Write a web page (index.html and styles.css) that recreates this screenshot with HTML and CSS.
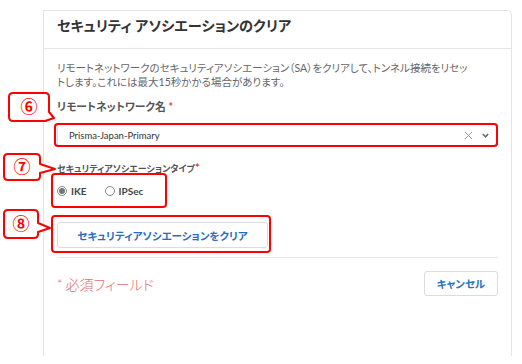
FILE: index.html
```html
<!DOCTYPE html>
<html lang="ja">
<head>
    <meta charset="UTF-8">
    <meta name="viewport" content="width=device-width, initial-scale=1.0">
    <title>セキュリティ アソシエーションのクリア</title>
    <link rel="stylesheet" href="styles.css">
</head>
<body>
    <div class="panel">
        <div class="panel-header">
            <h1>セキュリティ アソシエーションのクリア</h1>
        </div>
        <div class="panel-body">
            <p class="desc">リモートネットワークのセキュリティアソシエーション（SA）をクリアして、トンネル接続をリセットします。これには最大15秒かかる場合があります。</p>

            <div class="field">
                <label class="field-label">リモートネットワーク名 <span class="req">*</span></label>
                <div class="select">
                    <span class="select-value">Prisma-Japan-Primary</span>
                    <span class="select-icons">
                        <svg class="icon-clear" width="9" height="9" viewBox="0 0 9 9"><path d="M1 1 L8 8 M8 1 L1 8" stroke="#9a9a9a" stroke-width="1" fill="none"/></svg>
                        <svg class="icon-chevron" width="7" height="5" viewBox="0 0 7 5"><path d="M0.8 1 L3.5 3.8 L6.2 1" stroke="#666" stroke-width="1.5" fill="none"/></svg>
                    </span>
                </div>
            </div>

            <div class="field field-type">
                <label class="field-label type-label">セキュリティアソシエーションタイプ<span class="req">*</span></label>
                <div class="radios">
                    <label class="radio checked"><span class="radio-dot"></span>IKE</label>
                    <label class="radio"><span class="radio-dot"></span>IPSec</label>
                </div>
            </div>

            <div class="actions">
                <button class="btn btn-clear">セキュリティアソシエーションをクリア</button>
            </div>

            <div class="footer">
                <span class="required-note"><span class="note-star">*</span> 必須フィールド</span>
                <button class="btn btn-cancel">キャンセル</button>
            </div>
        </div>
    </div>

    <!-- 説明用の注釈（赤枠と番号） -->
    <svg class="annotations" width="522" height="364" viewBox="0 0 522 364">
        <g fill="none" stroke="#f00" stroke-width="2" stroke-linejoin="round">
            <rect x="55" y="124" width="442" height="22" rx="3"/>
            <rect x="52" y="174" width="114" height="33" rx="3"/>
            <rect x="52" y="216" width="218" height="36" rx="3"/>
            <path d="M13 93 H45 Q49 93 49 97 V112 L54 118 L45 121 H13 Q9 121 9 117 V97 Q9 93 13 93 Z" fill="#fff"/>
            <path d="M8 154 H36 Q40 154 40 158 V164 L55 169 L40 173 V176 Q40 180 36 180 H8 Q4 180 4 176 V158 Q4 154 8 154 Z" fill="#fff"/>
            <path d="M8 210 H34 Q38 210 38 214 V223 L50 228 L38 232 V234 Q38 238 34 238 H8 Q4 238 4 234 V214 Q4 210 8 210 Z" fill="#fff"/>
        </g>
        <g class="num" fill="#f00" text-anchor="middle">
            <text x="29" y="113">⑥</text>
            <text x="22" y="173">⑦</text>
            <text x="21" y="230">⑧</text>
        </g>
    </svg>
</body>
</html>
```

FILE: styles.css
```css
* {
    margin: 0;
    padding: 0;
    box-sizing: border-box;
}

body {
    font-family: Lato, 'Noto Sans CJK JP', sans-serif;
    font-feature-settings: "palt";
    background-color: #fff;
    color: #333;
    width: 522px;
    height: 364px;
    position: relative;
    overflow: hidden;
}

.panel {
    margin: 10px 0 0 43px;
    width: 469px;
    height: 346px;
    border: 1px solid #e4e4e4;
    border-bottom: none;
    border-top-right-radius: 5px;
    background: #fff;
}

.panel-header {
    height: 38px;
    padding: 5px 13px 0;
    border-bottom: 1px solid #e6e6e6;
}

h1 {
    font-size: 14.2px;
    line-height: 20px;
    font-weight: 700;
    color: #333;
}

.panel-body {
    padding: 0 13px;
}

.desc {
    margin-top: 12px;
    max-width: 414px;
    font-size: 10.5px;
    line-height: 14px;
    color: #666;
}

.field {
    margin-top: 10px;
}

.field-type {
    margin-top: 13px;
}

.field-label {
    display: block;
    font-size: 10.8px;
    line-height: 16px;
    font-weight: 700;
    color: #555;
}

.type-label {
    font-size: 9px;
    color: #555;
}

.type-label .req {
    font-size: 11px;
}

.req {
    color: #e53935;
}

.select {
    margin-top: 8px;
    height: 24px;
    border: 1px solid #dcdcdc;
    border-radius: 3px;
    padding: 0 8px 0 11px;
    display: flex;
    align-items: center;
    justify-content: space-between;
}

.select-value {
    font-size: 9.5px;
    color: #333;
}

.select-icons {
    display: flex;
    align-items: center;
    gap: 9px;
}

.radios {
    margin-top: 6px;
    height: 16px;
    display: flex;
    align-items: center;
    gap: 18px;
}

.radio {
    display: flex;
    align-items: center;
    gap: 4px;
    font-size: 10px;
    font-weight: 700;
    color: #444;
}

.radio-dot {
    width: 10px;
    height: 10px;
    border: 1px solid #888;
    border-radius: 50%;
    display: flex;
    align-items: center;
    justify-content: center;
}

.radio.checked .radio-dot::after {
    content: "";
    width: 6px;
    height: 6px;
    border-radius: 50%;
    background: #777;
}

.actions {
    margin-top: 23px;
}

.btn {
    font-family: Lato, 'Noto Sans CJK JP', sans-serif;
    font-feature-settings: "palt";
    background: #fff;
    border: 1px solid #dcdcdc;
    border-radius: 3px;
    color: #1f6fc5;
    font-weight: 700;
    font-size: 10.5px;
    height: 26px;
}

.btn-clear {
    width: 211px;
}

.btn-cancel {
    width: 74px;
    height: 25px;
}

.footer {
    margin-top: 9px;
    padding-top: 13px;
    border-top: 1px solid #e6e6e6;
    display: flex;
    align-items: center;
    justify-content: space-between;
}

.required-note {
    font-size: 14px;
    font-weight: 300;
    color: #e86b6b;
    display: flex;
    align-items: center;
}

.note-star {
    font-size: 13px;
    margin-right: 3px;
}

.annotations {
    position: absolute;
    top: 0;
    left: 0;
    pointer-events: none;
}

.num text {
    font-family: 'Noto Sans CJK JP', sans-serif;
    font-size: 17px;
    font-weight: 700;
}
```
